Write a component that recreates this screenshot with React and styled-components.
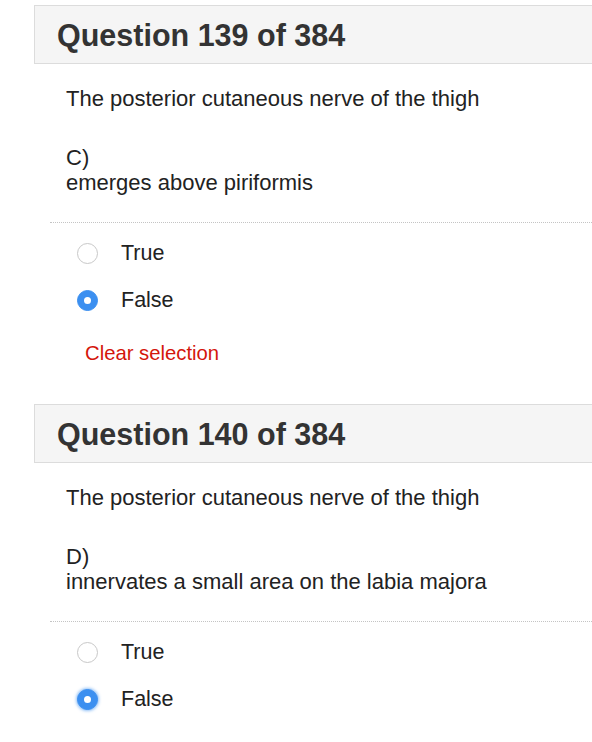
import styled, { createGlobalStyle } from 'styled-components'

const GlobalStyle = createGlobalStyle`
  html, body {
    margin: 0;
    padding: 0;
    background: #fff;
    overflow: hidden;
  }
  body {
    font-family: 'Liberation Sans', Arial, Helvetica, sans-serif;
    color: #222;
  }
`

const Page = styled.div`
  padding-left: 34px;
  padding-top: 5px;
  margin-right: -12px;
`

const Question = styled.section`
  margin-bottom: 38px;
`

const Header = styled.div`
  display: flex;
  align-items: center;
  padding-left: 22px;
  padding-top: 2px;
  box-sizing: border-box;
  height: 59px;
  background: #f5f5f5;
  border: 1px solid #dcdcdc;
`

const Title = styled.h2`
  margin: 0;
  font-size: 30.5px;
  font-weight: 700;
  color: #333;
`

const Body = styled.div`
  padding-left: 32px;
  padding-top: 22px;
  font-size: 22px;
  line-height: 25px;
  color: #222;
`

const Stem = styled.p`
  margin: 0 0 34px;
`

const Statement = styled.p`
  margin: 0;
`

const Divider = styled.hr`
  margin: 27px 0 0 -16px;
  border: 0;
  border-top: 1px dotted #c4c4c4;
  height: 0;
`

const Options = styled.div`
  padding-top: 7px;
  padding-left: 11px;
`

const Option = styled.label`
  display: flex;
  align-items: center;
  height: 47px;
  font-size: 21.5px;
  color: #222;
`

const Radio = styled.span`
  box-sizing: border-box;
  width: 21px;
  height: 21px;
  border-radius: 50%;
  margin-right: 23px;
  display: flex;
  align-items: center;
  justify-content: center;
  background: ${(p) => (p.checked ? '#3b8ff0' : '#fff')};
  border: 1px solid ${(p) => (p.checked ? '#3b8ff0' : '#c8c8c8')};
  box-shadow: ${(p) => (p.focused ? '0 0 3px 1px rgba(59, 143, 240, 0.55)' : 'none')};

  &::after {
    content: '';
    display: ${(p) => (p.checked ? 'block' : 'none')};
    width: 7px;
    height: 7px;
    border-radius: 50%;
    background: #fff;
  }
`

const ClearLink = styled.a`
  display: block;
  margin: 17px 0 0 19px;
  font-size: 20.3px;
  line-height: 25px;
  color: #d4160c;
  text-decoration: none;
`

const questions = [
  {
    number: 139,
    letter: 'C)',
    text: 'emerges above piriformis',
    clear: true,
  },
  {
    number: 140,
    letter: 'D)',
    text: 'innervates a small area on the labia majora',
    focused: true,
  },
]

const App = () => (
  <>
    <GlobalStyle />
    <Page>
      {questions.map((q) => (
        <Question key={q.number}>
          <Header>
            <Title>Question {q.number} of 384</Title>
          </Header>
          <Body>
            <Stem>The posterior cutaneous nerve of the thigh</Stem>
            <Statement>{q.letter}</Statement>
            <Statement>{q.text}</Statement>
            <Divider />
            <Options>
              <Option>
                <Radio />
                True
              </Option>
              <Option>
                <Radio checked focused={q.focused} />
                False
              </Option>
            </Options>
            {q.clear && <ClearLink href='#'>Clear selection</ClearLink>}
          </Body>
        </Question>
      ))}
    </Page>
  </>
)

export default App
